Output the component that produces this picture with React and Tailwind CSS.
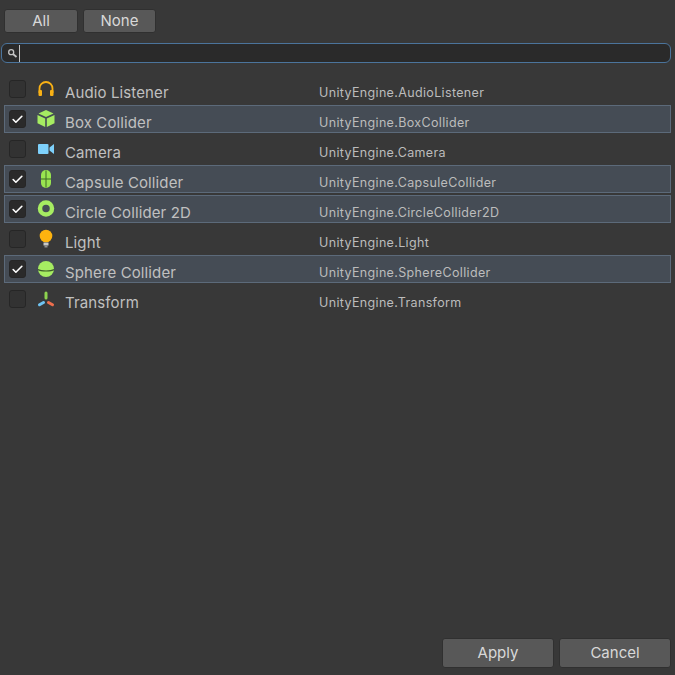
import { Check } from 'lucide-react';

const components = [
  { name: 'Audio Listener', type: 'UnityEngine.AudioListener', icon: 'audio', on: false },
  { name: 'Box Collider', type: 'UnityEngine.BoxCollider', icon: 'box', on: true },
  { name: 'Camera', type: 'UnityEngine.Camera', icon: 'camera', on: false },
  { name: 'Capsule Collider', type: 'UnityEngine.CapsuleCollider', icon: 'capsule', on: true },
  { name: 'Circle Collider 2D', type: 'UnityEngine.CircleCollider2D', icon: 'circle', on: true },
  { name: 'Light', type: 'UnityEngine.Light', icon: 'light', on: false },
  { name: 'Sphere Collider', type: 'UnityEngine.SphereCollider', icon: 'sphere', on: true },
  { name: 'Transform', type: 'UnityEngine.Transform', icon: 'transform', on: false },
];

function RowIcon({ kind }) {
  return (
    <svg width="20" height="20" viewBox="0 0 20 20" className="block">
      {kind === 'audio' && (
        <g>
          <path d="M3.500 14V9.500a6.500 6.500 0 0 1 13 0V14" fill="none" stroke="#f9b115" strokeWidth="1.800" />
          <rect x="2.500" y="11" width="3.500" height="6" rx="1" fill="#f9b115" />
          <rect x="14" y="11" width="3.500" height="6" rx="1" fill="#f9b115" />
        </g>
      )}
      {kind === 'box' && (
        <g fill="#a6ec62">
          <path d="M10 1l7.500 3.500L10 8 2.500 4.500z" />
          <path d="M1.500 6l7.700 3.400V18l-7.700-3.800z" />
          <path d="M18.500 6l-7.700 3.400V18l7.700-3.800z" />
        </g>
      )}
      {kind === 'camera' && (
        <g fill="#7ed1fb">
          <rect x="2" y="5" width="10.500" height="10" rx="1" />
          <path d="M13.500 8.500L18 5v10l-4.500-3.500z" />
        </g>
      )}
      {kind === 'capsule' && (
        <g>
          <rect x="5" y="1" width="10" height="18" rx="5" fill="#99e550" />
          <path d="M10 1.500v17M5 10h10" stroke="#3f6a24" strokeWidth="1" fill="none" />
        </g>
      )}
      {kind === 'circle' && <circle cx="10" cy="9.500" r="6" fill="none" stroke="#a6ec62" strokeWidth="4.500" />}
      {kind === 'light' && (
        <g>
          <circle cx="10" cy="7" r="6.300" fill="#fdb30f" />
          <path d="M7.500 13.500h5v3h-5z" fill="#c9c9c9" />
          <path d="M8.500 16.500h3v2h-3z" fill="#8f8f8f" />
        </g>
      )}
      {kind === 'sphere' && (
        <g>
          <circle cx="10" cy="10" r="8" fill="#a6ec62" />
          <path d="M2 10.500c3 2 13 2 16 0" fill="none" stroke="#3c5c28" strokeWidth="1.200" />
        </g>
      )}
      {kind === 'transform' && (
        <g fill="none" strokeWidth="3" strokeLinecap="round">
          <path d="M10 4v5" stroke="#8dd24f" />
          <path d="M12.500 13.500l4 2.200" stroke="#ed6e4d" />
          <path d="M7.500 13.500l-4 2.200" stroke="#6fc3f2" />
        </g>
      )}
    </svg>
  );
}

function ToolButton({ label, className }) {
  return (
    <button className={`h-6 rounded-[3px] border border-[#303030] bg-[#585858] text-[#d8d8d8] text-[15px] ${className}`}>
      {label}
    </button>
  );
}

function ComponentRow({ item }) {
  return (
    <div
      className={`h-7 mb-0.5 flex items-center pl-1 border ${
        item.on ? 'border-[#5c6a7a] bg-[#454c55]' : 'border-transparent'
      }`}
    >
      <div
        className={`w-[17px] h-[18px] rounded-[3px] border border-[#262626] flex items-center justify-center ${
          item.on ? 'bg-[#2a2a2a]' : 'bg-[#323232]'
        }`}
      >
        {item.on && <Check size={13} strokeWidth={3} className="text-white" />}
      </div>
      <div className="ml-[10px] w-5">
        <RowIcon kind={item.icon} />
      </div>
      <span className="ml-[9px] w-[254px] text-[15px] tracking-[0.12px] text-[#c0c0c0] translate-y-1">{item.name}</span>
      <span className="text-[12.500px] tracking-[0.35px] text-[#bcbcbc] translate-y-1">{item.type}</span>
    </div>
  );
}

export default function App() {
  return (
    <div className="w-[675px] h-[675px] flex flex-col bg-[#383838] font-['Inter',sans-serif]">
      <div className="flex gap-[5px] pt-[9px] pl-1">
        <ToolButton label="All" className="w-[74px]" />
        <ToolButton label="None" className="w-[73px]" />
      </div>

      <div className="mt-2.5 mx-px w-[670px] h-5 flex items-center rounded-[6px] border-[1.5px] border-[#4b749c] bg-[#2a2a2a] pl-[5px]">
        <svg width="11" height="11" viewBox="0 0 11 11" className="shrink-0">
          <circle cx="4.200" cy="4.200" r="2.500" fill="none" stroke="#c4c4c4" strokeWidth="1.300" />
          <path d="M6 6l3.500 3" stroke="#c4c4c4" strokeWidth="1.800" />
        </svg>
        <div className="ml-[1px] w-px h-[17px] bg-[#c4c4c4]" />
      </div>

      <div className="mt-3 ml-1 mr-1 flex-1">
        {components.map((item) => (
          <ComponentRow key={item.type} item={item} />
        ))}
      </div>

      <div className="flex justify-end gap-[5px] pr-1 pb-[7px]">
        <button className="w-[112px] h-[30px] rounded-[3px] border border-[#303030] bg-[#585858] text-[#d8d8d8] text-[15px]">
          Apply
        </button>
        <button className="w-[112px] h-[30px] rounded-[3px] border border-[#303030] bg-[#585858] text-[#d8d8d8] text-[15px]">
          Cancel
        </button>
      </div>
    </div>
  );
}
